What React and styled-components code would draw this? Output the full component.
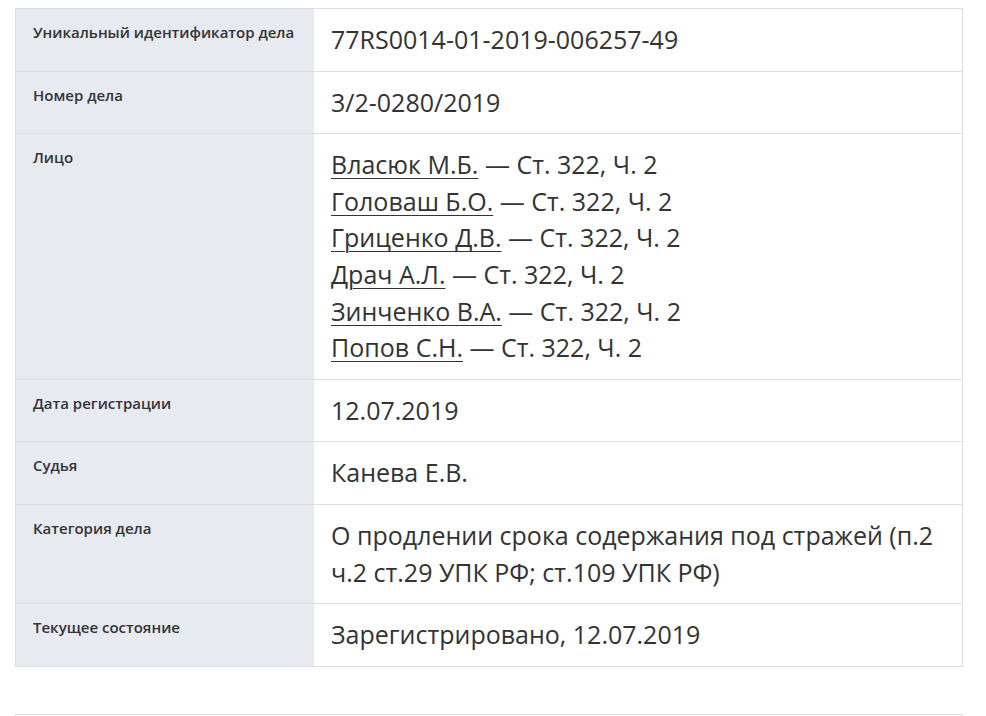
import React from "react";
import styled, { createGlobalStyle } from "styled-components";

const Global = createGlobalStyle`
  body {
    margin: 0;
    background: #fff;
    font-family: "Open Sans", "Noto Sans", sans-serif;
    color: #333;
  }
`;

const Page = styled.div`
  padding: 8px 23px 0 15px;
  height: 716px;
  overflow: hidden;
  box-sizing: border-box;
`;

const Table = styled.div`
  width: 948px;
  border: 1px solid #dcdee3;
  box-sizing: border-box;
`;

const Row = styled.div`
  display: grid;
  grid-template-columns: 298px 1fr;
  & + & {
    border-top: 1px solid #dcdee3;
  }
`;

const Label = styled.div`
  background: #e7eaf1;
  padding: 13px 17px 12px;
  font-size: 15px;
  font-weight: 600;
  line-height: 20px;
  color: #333;
`;

const Value = styled.div`
  padding: 12px 17px 13px;
  font-size: 25px;
  line-height: 36.6px;
  color: #333;
`;

const Person = styled.div`
  a {
    color: #333;
    text-decoration: underline;
    text-decoration-thickness: 1px;
    text-underline-offset: 4px;
  }
`;

const NextTable = styled.div`
  margin-top: 47px;
  width: 948px;
  height: 200px;
  border: 1px solid #dcdee3;
  box-sizing: border-box;
`;

const persons = [
  "Власюк М.Б.",
  "Головаш Б.О.",
  "Гриценко Д.В.",
  "Драч А.Л.",
  "Зинченко В.А.",
  "Попов С.Н.",
];

export default function App() {
  return (
    <>
      <Global />
      <Page>
        <Table>
          <Row>
            <Label>Уникальный идентификатор дела</Label>
            <Value>77RS0014-01-2019-006257-49</Value>
          </Row>
          <Row>
            <Label>Номер дела</Label>
            <Value>3/2-0280/2019</Value>
          </Row>
          <Row>
            <Label>Лицо</Label>
            <Value>
              {persons.map((p) => (
                <Person key={p}>
                  <a href="#">{p}</a> — Ст. 322, Ч. 2
                </Person>
              ))}
            </Value>
          </Row>
          <Row>
            <Label>Дата регистрации</Label>
            <Value>12.07.2019</Value>
          </Row>
          <Row>
            <Label>Судья</Label>
            <Value>Канева Е.В.</Value>
          </Row>
          <Row>
            <Label>Категория дела</Label>
            <Value>
              О продлении срока содержания под стражей (п.2 ч.2 ст.29 УПК РФ;
              ст.109 УПК РФ)
            </Value>
          </Row>
          <Row>
            <Label>Текущее состояние</Label>
            <Value>Зарегистрировано, 12.07.2019</Value>
          </Row>
        </Table>
        <NextTable />
      </Page>
    </>
  );
}
